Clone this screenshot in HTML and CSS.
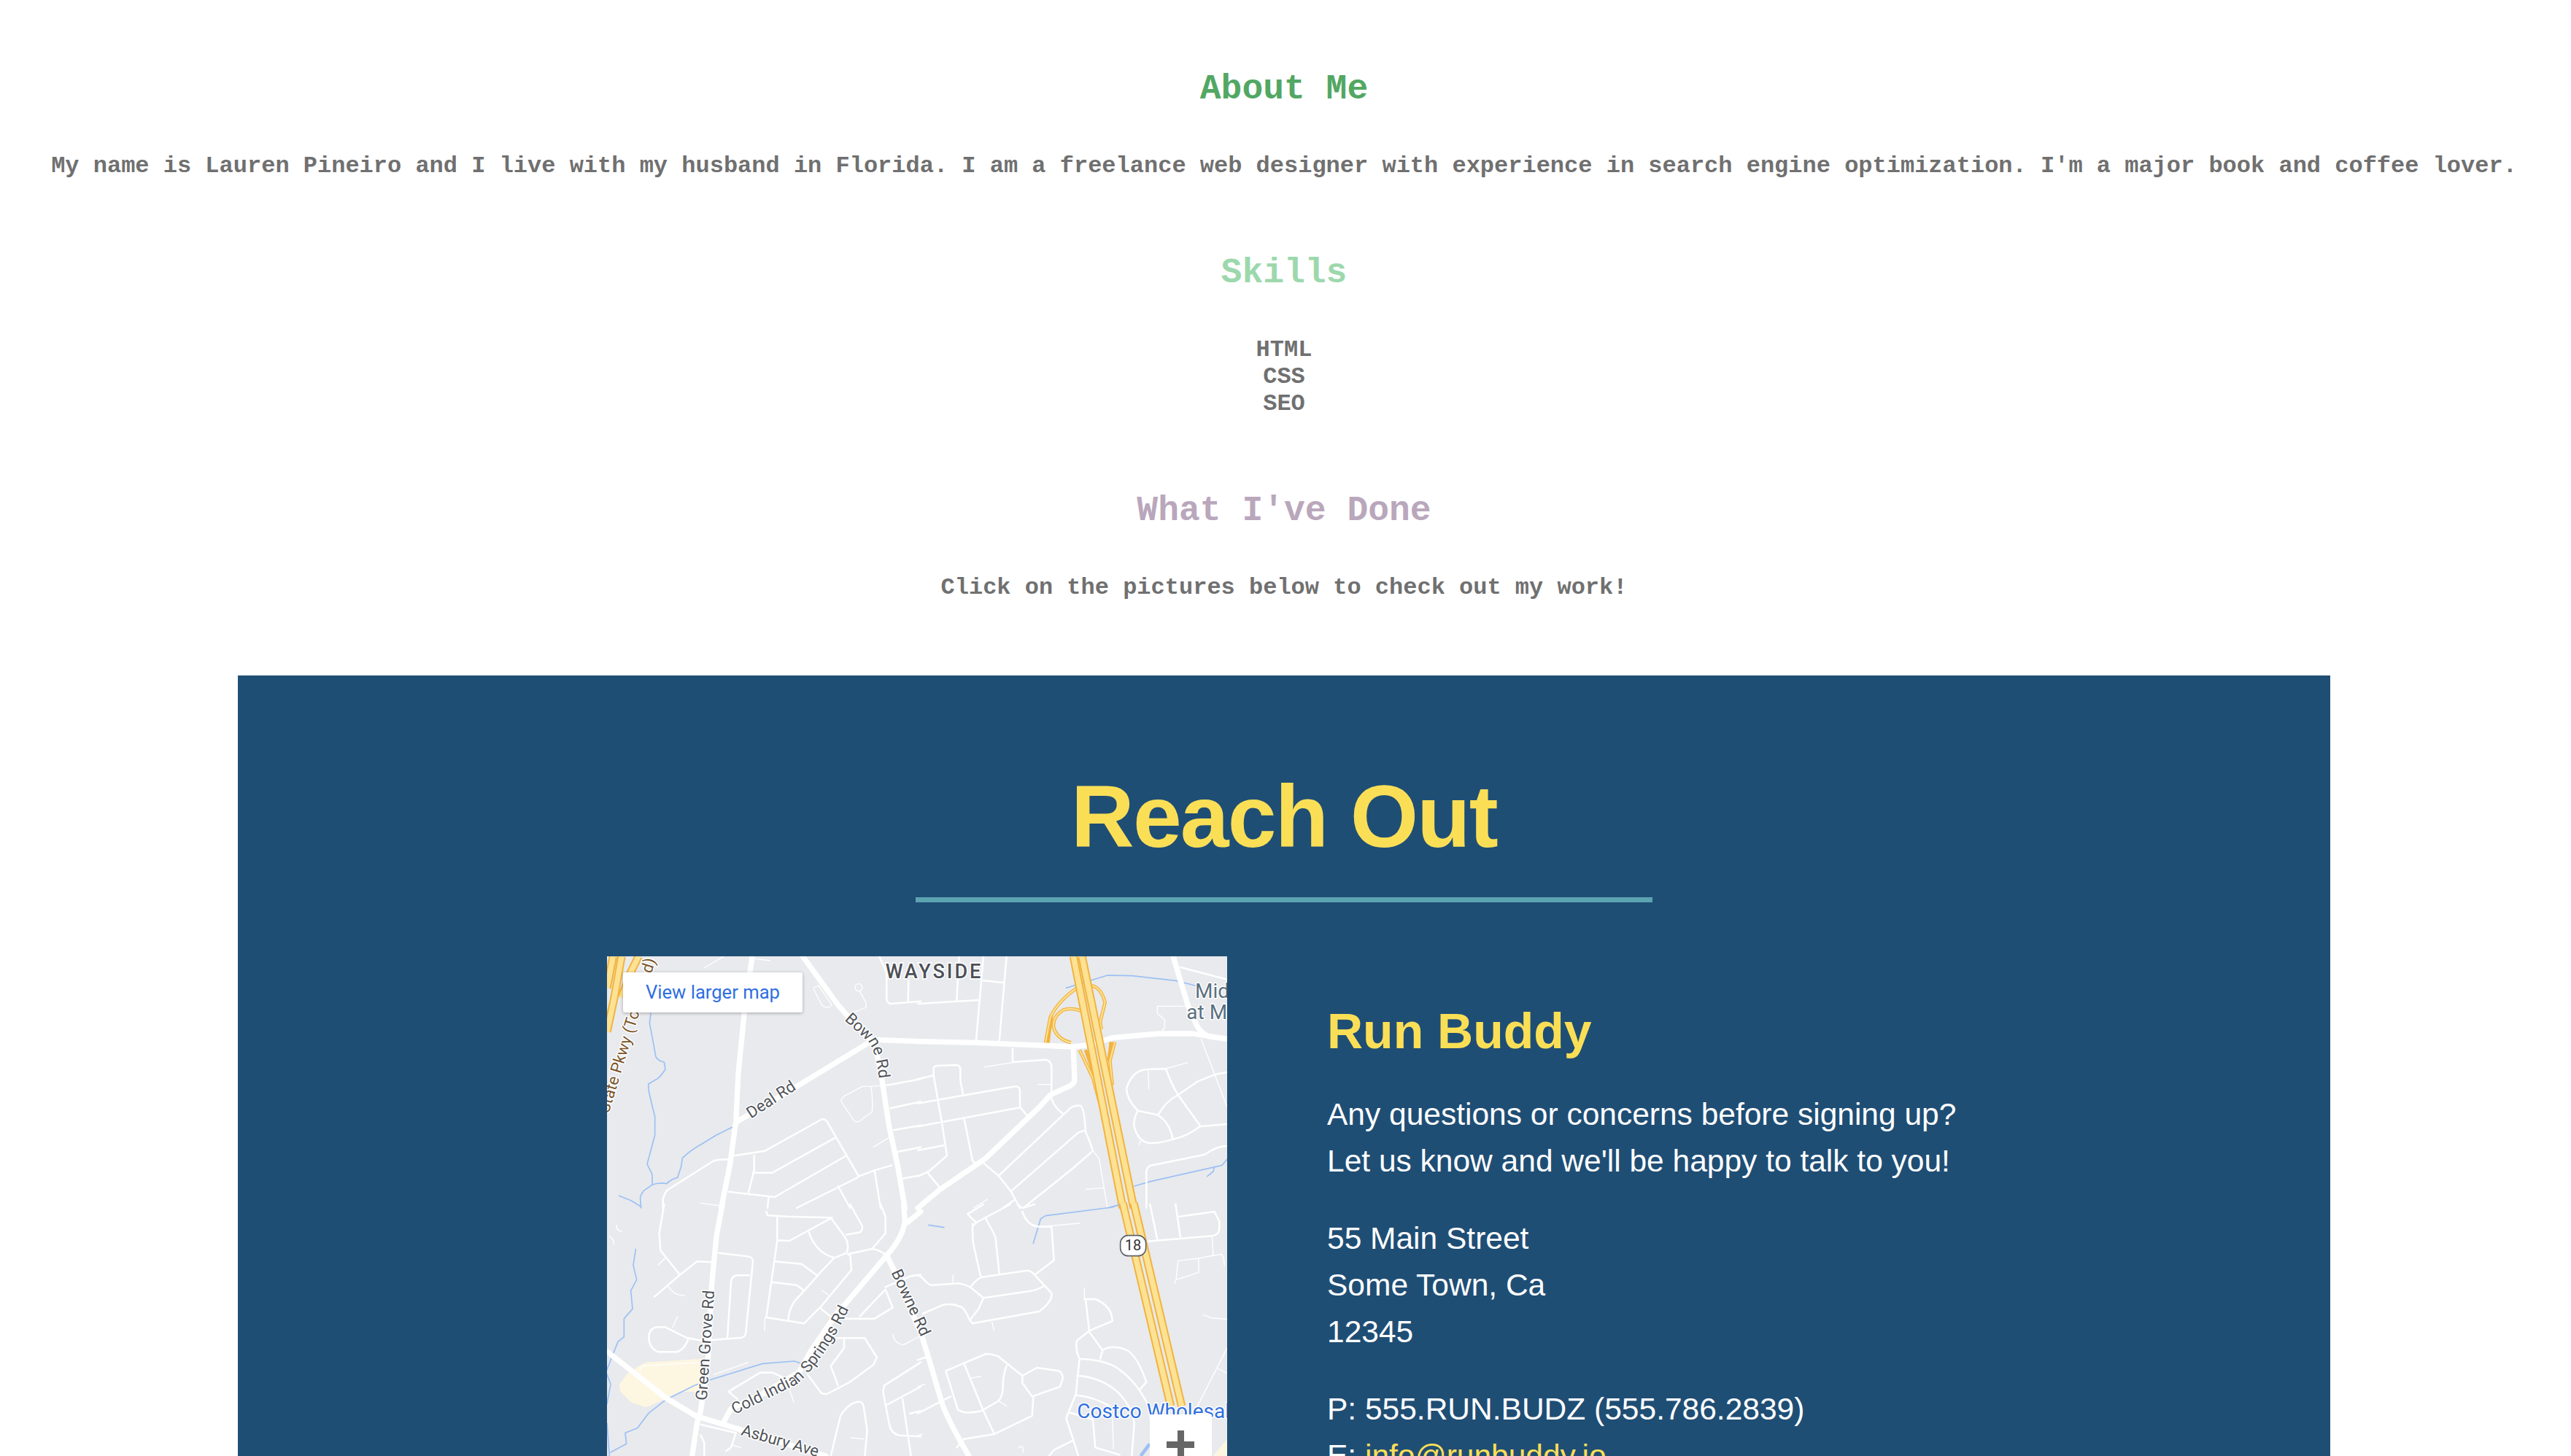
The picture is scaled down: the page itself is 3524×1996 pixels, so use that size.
FILE: index.html
```html
<!DOCTYPE html>
<html lang="en">
<head>
<meta charset="utf-8">
<title>Run Buddy</title>
<link rel="stylesheet" href="styles.css">
</head>
<body>
<main class="page">
  <section class="about">
    <h2 class="heading heading-green">About Me</h2>
    <p class="copy copy-bio">My name is Lauren Pineiro and I live with my husband in Florida. I am a freelance web designer with experience in search engine optimization. I'm a major book and coffee lover.</p>
    <h2 class="heading heading-mint">Skills</h2>
    <p class="copy copy-skills">HTML<br>CSS<br>SEO</p>
    <h2 class="heading heading-mauve">What I've Done</h2>
    <p class="copy copy-last">Click on the pictures below to check out my work!</p>
  </section>

  <section class="contact">
    <h2 class="contact-title">Reach Out</h2>
    <div class="contact-row">
      <div class="map">
        <svg class="map-art" viewBox="0 0 850 900" xmlns="http://www.w3.org/2000/svg" aria-hidden="true">
          <rect class="land" width="850" height="900"/>
          <!-- upper left -->
          <g transform="scale(.33333)">
            <path class="stream" d="M180 235L175 275Q190 350 200 410Q205 428 235 435L240 465Q220 495 205 505L170 525Q170 550 175 570L197 660V735L165 855L185 895L187 940M515 703L450 735L385 775Q340 800 310 830L305 865L290 910Q265 915 245 935Q215 928 185 940L150 965Q135 985 137 1000L140 1035M50 985L100 1005L140 1030"/>
            <path class="thin" d="M400 48L480 0M610 10L670 18M385 1015L460 1025M1095 785L1160 745M1085 535H1050L975 575Q958 590 965 600L1015 675Q1025 685 1035 680L1090 640Q1095 590 1085 535L1150 530M850 128L870 120L925 200Q915 212 905 210Q890 210 880 195L850 135M1040 145L1065 190V210L1030 225L1010 230"/>
            <circle class="thin" cx="1035" cy="128" r="15"/>
            <path class="minor" d="M230 1035V1000Q235 975 250 960L440 840Q465 835 500 835M525 820L650 800L880 672Q895 665 905 680L1035 905M605 820V880L582 970M600 890H680L940 745M500 968L690 990L980 822M1035 905L1100 880L1170 860M780 1035L960 945L1030 910M660 1035L665 990M1150 530L1290 505M1165 625L1290 598M1180 715L1290 695M1190 805L1290 785M1210 915L1290 900M1100 880L1125 1035M950 945L1000 1035M1120 0L1150 70V175Q1152 192 1165 195L1290 185M1240 100L1238 185"/>
            <path class="major" d="M597 0L565 230L540 480L530 680L505 860L470 1035M805 0L870 90L950 200L1020 280L1100 360L1125 470L1160 700L1195 860L1225 1035M535 680L780 535L1085 350M1100 343L1290 350"/>
            <path class="hw-edge" d="M25 0L0 130M60 0L30 170L0 310M130 0L100 60L60 170"/>
            <path class="hw-fill" d="M25 0L0 130M60 0L30 170L0 310M130 0L100 60L60 170"/>
          </g>
          <!-- upper right -->
          <g transform="translate(426 0) scale(.33333)">
            <path class="stream" d="M610 130L650 118L780 78L880 80L1060 100L1140 120M890 945L960 925L1250 860L1272 835M1190 905L1215 885L1220 865M780 1035L830 1022"/>
            <path class="thin" d="M275 455L390 437M495 527H545M720 800L745 830L780 1035M690 958L765 952M985 205H1100M985 205V235L1015 260V295L1005 305M1165 340L1272 620M947 465L950 545M915 760L910 775M1110 437L1020 462M230 1035L285 1000"/>
            <path class="minor" d="M0 505L65 490L65 465Q65 450 80 450L160 447Q175 450 175 465V510L185 565M65 490L100 690L120 820L45 885L0 905M0 605L400 535Q420 535 420 555V620L450 655M0 700L420 622M0 798L105 778M190 665L225 840L235 850M40 890L90 950M170 0L160 180M0 195L250 180M270 0L240 345M270 100L350 108M365 0L335 350M390 380V435L525 425Q550 430 550 455V570M550 585Q560 620 600 650M335 900L600 650L630 622Q650 610 670 615Q685 625 690 720L710 770L720 800L640 870L540 950L440 1030M385 965L660 725L690 715M270 850L335 905L385 970L420 1035M350 1035L400 1000M1080 45L1272 95M1020 462L940 465Q880 470 858 545Q860 590 905 635L985 652Q1035 680 1048 750M905 635Q885 670 890 700Q905 760 950 768Q1000 770 1050 752Q1110 740 1160 700L1272 690M1020 462Q1040 520 1070 570L1160 695M990 650Q1015 600 1070 570L1150 515L1225 485L1272 477M940 1035V885Q942 865 960 860L1180 815Q1230 780 1272 780"/>
            <path class="major" d="M0 350L240 355L640 372L700 365L800 335L990 318H1130L1272 340M640 385L645 510Q640 530 610 540L545 570L500 620L280 830L90 960L0 1035M1050 0L1080 100L1110 200L1150 290Q1170 320 1200 330L1272 340"/>
            <path class="ramp-edge" d="M655 130Q580 180 545 250L525 355M670 225Q640 210 600 220Q555 245 558 290Q570 340 630 355M550 240L535 355M715 120Q755 130 770 190L750 270L755 300M665 385L720 500L750 610M690 385L720 470M810 352L790 430L800 530M795 352L785 430"/>
            <path class="ramp-fill" d="M655 130Q580 180 545 250L525 355M670 225Q640 210 600 220Q555 245 558 290Q570 340 630 355M715 120Q755 130 770 190L750 270L755 300M665 385L720 500L750 610M810 352L790 430L800 530"/>
            <path class="hw-edge" d="M640 0L843 1035M675 0L888 1035"/>
            <path class="hw-fill" d="M640 0L843 1035M675 0L888 1035"/>
          </g>
          <!-- lower left -->
          <g transform="translate(0 340) scale(.33333)">
            <path class="park" d="M130 665L160 650L390 635L385 770H300L240 800L160 835L100 815L55 770L50 740L85 695Z"/>
            <path class="stream" d="M118 185L108 250L122 310L98 355L105 430L70 470V545L45 565L15 640L0 680M0 700L15 740L0 820M800 655L770 645L640 655L430 720L360 745L240 805L170 860L125 920L75 940L80 985L15 1020M0 900L10 1035"/>
            <path class="thin" d="M135 685L145 665L385 650M250 335Q275 375 318 375M240 220L210 250M270 505L290 462M440 700L580 650M885 355L910 372M650 465L648 520M1175 535Q1185 575 1220 578L1290 540M1005 960L1055 965M515 990L550 1000M730 715Q755 770 768 815M10 130Q30 145 28 165M40 85Q35 105 60 112"/>
            <path class="minor" d="M235 0L215 120L220 190L300 290M430 238L370 235L300 290L195 380M460 200L585 215Q600 220 600 235L570 535Q565 545 555 548L440 557M585 292H530Q510 300 510 320L495 548M700 55V150L655 465L810 490L880 420L1005 270L1000 210L990 205M655 30L660 45L740 50L920 55L975 130Q1000 165 985 200L935 220Q860 200 830 115M1000 0L1050 90Q1050 110 1040 115L985 125M700 148L750 150L925 55M690 235L800 245L865 293L930 225M680 320L780 332L810 355M865 295L770 400Q745 440 745 480M990 205L1090 183Q1130 190 1155 215M1090 183L1145 120V50L1125 0M875 425L930 470H1100L1175 425L1145 350L1040 460M1145 340L1250 295L1290 290M330 550L240 505H200Q172 515 172 545Q172 590 210 607H290Q325 590 335 550M330 550L390 560L445 557M925 550H1060L1110 630L1095 660L1000 730L905 780Q885 780 880 775L825 700M975 555V590L920 665L950 745M500 770L630 692H680L730 715M500 770L535 800M400 1035V980L385 950M385 905L530 940L510 1000L490 1015M920 1035L960 870Q990 820 1030 812Q1050 810 1055 830L1070 930L1060 1035M1290 650L1140 745L1135 770L1160 900Q1165 940 1200 950L1290 955M1150 825L1290 750M1215 800L1250 1035M1245 860L1290 850"/>
            <path class="major" d="M475 0L450 130L430 340L415 640L385 850L370 900L350 1035M0 605L240 795L365 870L900 1035M1290 30L1235 75M1220 0L1225 70Q1215 140 1150 210L980 410L950 440L840 600L790 690L640 780L510 840L480 895M1150 210L1180 270L1290 530"/>
          </g>
          <!-- lower right -->
          <g transform="translate(426 340) scale(.33333)">
            <path class="park" d="M1210 1040L1272 965V1040Z"/>
            <path class="stream stream-wide" d="M920 1030L950 990"/>
            <path class="stream" d="M45 85L108 95M475 160L505 60L525 47L800 12L830 0"/>
            <path class="thin" d="M145 290V325M305 485L313 517M665 78L500 92M685 343V390M1210 130L1215 210L1155 222L1070 232L1062 310L1155 280V225M1215 210L1250 205Q1260 220 1260 250M1060 315L1055 325M1175 455L1210 468L1272 472M1272 590L1150 830M1235 675L1272 695M215 715L258 708M335 810L365 830M415 1000L430 995L435 1020M0 950L20 945M0 750L30 740M800 880L805 1005"/>
            <path class="minor" d="M0 640L30 630M0 860L135 790M0 290Q25 305 30 315Q50 335 60 332L170 325Q195 330 215 340L270 385L440 360Q490 355 520 335M220 335Q235 315 260 300L450 272Q470 275 480 290L550 365Q555 400 500 440L225 490L210 470Q190 420 170 420Q140 405 100 415L20 450M270 385L250 430L215 475M225 80Q225 150 230 170L258 295M280 60Q320 130 320 140L335 285M205 40L240 75L225 90M240 75L380 0M205 40L270 0M430 30Q450 90 500 92H550L560 230L480 290M410 0L430 15L480 0M945 152L1210 130Q1240 125 1240 100V70L1220 30L1075 50M1060 0L1080 135M955 0L985 145M685 390H730Q800 420 800 480L705 520L690 390M705 520L655 560Q645 590 665 635L650 780L610 880L640 970L660 1035M705 525L760 600L750 635M760 600Q800 575 860 600Q900 620 940 730L915 760M665 635Q780 640 830 680Q900 730 950 830M655 705Q750 710 820 770Q880 830 890 900L880 1035M650 785Q720 790 790 830M620 855L720 885L730 1000L830 1030M640 970L560 1010L540 1035M115 685L280 615Q305 615 330 625L430 705L490 672L580 685Q600 700 595 720L585 750L470 790L430 735V705M115 685L165 845Q195 865 260 850L330 810Q350 790 350 750Q350 700 365 665M190 655L270 850L315 945L470 870L475 790M315 945L190 965L160 1000"/>
            <path class="major" d="M10 520L50 650L100 820Q130 900 210 1035"/>
            <path class="hw-edge" d="M843 -5L1040 830M888 -5L1085 830"/>
            <path class="hw-fill" d="M843 -5L1040 830M888 -5L1085 830"/>
          </g>
          <!-- labels -->
          <defs>
            <path id="p-bowne-a" d="M975 262L1075 352Q1110 400 1120 520"/>
            <path id="p-cold" d="M525 865L780 740Q890 650 1010 400"/>
            <path id="p-bowne-c" d="M1168 280L1300 565"/>
          </defs>
          <g transform="scale(.33333)">
            <text class="label label-brown" transform="translate(200 15) rotate(-73)" text-anchor="end">State Pkwy (Toll Road)</text>
            <text class="label" transform="translate(592 668) rotate(-33)">Deal Rd</text>
            <text class="label"><textPath href="#p-bowne-a">Bowne Rd</textPath></text>
            <text class="place" x="1145" y="90">WAYSIDE</text>
            <text class="label label-slate" x="2418" y="170">Mid</text>
            <text class="label label-slate" x="2383" y="257">at M</text>
          </g>
          <g transform="translate(0 340) scale(.33333)">
            <text class="label" transform="translate(410 808) rotate(-86)">Green Grove Rd</text>
            <text class="label"><textPath href="#p-cold">Cold Indian Springs Rd</textPath></text>
            <text class="label" transform="translate(548 948) rotate(16)">Asbury Ave</text>
            <text class="label"><textPath href="#p-bowne-c">Bowne Rd</textPath></text>
          </g>
          <g transform="translate(426 340) scale(.33333)">
            <rect class="shield" x="833" y="128" width="105" height="84" rx="32"/>
            <text class="shield-num" x="885" y="190" text-anchor="middle">18</text>
            <text class="label label-blue" x="655" y="878">Costco Wholesale</text>
          </g>
        </svg>
        <a class="map-link">View larger map</a>
        <div class="map-zoom"><span class="plus"></span></div>
      </div>
      <div class="info">
        <h3 class="info-title">Run Buddy</h3>
        <p class="info-text">Any questions or concerns before signing up?<br>Let us know and we'll be happy to talk to you!</p>
        <p class="info-text">55 Main Street<br>Some Town, Ca<br>12345</p>
        <p class="info-text">P: 555.RUN.BUDZ (555.786.2839)<br>E: <a class="info-link">info@runbuddy.io</a></p>
      </div>
    </div>
  </section>
</main>
</body>
</html>
```
FILE: styles.css
```css
html, body {
  margin: 0;
  height: 1996px;
  overflow: hidden;
  background: #fff;
}

.page {
  width: 3520px;
}

.about {
  padding-top: 95px;
  text-align: center;
  font-family: "Liberation Mono", "Courier New", monospace;
  font-weight: 700;
  color: #707070;
}

.heading {
  margin: 0 0 60px;
  font-size: 48px;
  font-weight: 700;
}

.heading-green { color: #52a763; }
.heading-mint { color: #9dd8ad; }
.heading-mauve { color: #b9a7bc; }

.copy {
  margin: 0 0 101px;
  font-size: 32px;
}

.copy-last {
  margin-bottom: 102px;
}

.contact {
  width: 2868px;
  height: 1200px;
  margin: 0 auto;
  padding-top: 121px;
  box-sizing: border-box;
  background: #1f4e75;
  font-family: "Liberation Sans", Arial, Helvetica, sans-serif;
  color: #fff;
}

.contact-title {
  width: 1010px;
  margin: 0 auto 74px;
  padding-bottom: 39px;
  border-bottom: 7px solid #5ba3b0;
  text-align: center;
  font-size: 120px;
  line-height: 144px;
  font-weight: 700;
  letter-spacing: -1.8px;
  color: #fadf56;
}

.contact-row {
  display: flex;
  gap: 137px;
  padding-left: 506px;
}

.map {
  position: relative;
  flex: none;
  width: 850px;
  height: 900px;
  overflow: hidden;
}

.map-art {
  display: block;
  width: 850px;
  height: 900px;
}

.land { fill: #e8eaed; }
.park { fill: #fdf6e1; }

.stream, .thin, .minor, .major, .hw-edge, .hw-fill, .ramp-edge, .ramp-fill {
  fill: none;
  stroke-linecap: round;
  stroke-linejoin: round;
}

.stream { stroke: #9dc0f4; stroke-width: 5; }
.stream-wide { stroke-width: 14; }
.thin { stroke: #fff; stroke-width: 4; }
.minor { stroke: #fff; stroke-width: 7.5; }
.major { stroke: #fff; stroke-width: 22; }
.hw-edge { stroke: #f2b340; stroke-width: 34; stroke-linecap: butt; }
.hw-fill { stroke: #fde293; stroke-width: 22; stroke-linecap: butt; }
.ramp-edge { stroke: #f2b340; stroke-width: 14; stroke-linecap: butt; }
.ramp-fill { stroke: #fde293; stroke-width: 6; stroke-linecap: butt; }

.label {
  font-family: Roboto, "Liberation Sans", sans-serif;
  font-size: 66px;
  fill: #50545a;
  stroke: #fff;
  stroke-width: 9px;
  paint-order: stroke;
  stroke-linejoin: round;
}

.label-brown { fill: #7b5528; }
.label-slate { fill: #5a7080; font-size: 84px; }
.label-blue { fill: #2f6fe0; font-size: 84px; }

.place {
  font-family: Roboto, "Liberation Sans", sans-serif;
  font-size: 81px;
  font-weight: 500;
  letter-spacing: 9px;
  fill: #4c5056;
  stroke: #fff;
  stroke-width: 9px;
  paint-order: stroke;
}

.shield { fill: #fff; stroke: #5f6368; stroke-width: 5; }

.shield-num {
  font-family: Roboto, "Liberation Sans", sans-serif;
  font-size: 60px;
  fill: #333;
}

.map-link {
  position: absolute;
  left: 22px;
  top: 22px;
  width: 246px;
  height: 55px;
  box-sizing: border-box;
  padding-left: 31px;
  background: #fff;
  border-radius: 3px;
  box-shadow: 0 1px 4px rgba(0, 0, 0, .3);
  font-family: Roboto, "Liberation Sans", sans-serif;
  font-size: 25.6px;
  line-height: 55px;
  color: #2f6fe0;
}

.map-zoom {
  position: absolute;
  left: 744px;
  top: 628px;
  width: 85px;
  height: 100px;
  background: #fff;
}

.plus {
  position: absolute;
  left: 23px;
  top: 22px;
  width: 38px;
  height: 38px;
  background:
    linear-gradient(#666, #666) center / 100% 9px no-repeat,
    linear-gradient(#666, #666) center / 9px 100% no-repeat;
}

.info {
  width: 900px;
}

.info-title {
  margin: 62px 0 43px;
  font-size: 68px;
  line-height: 80px;
  font-weight: 700;
  color: #fadf56;
}

.info-text {
  margin: 0 0 42px;
  font-size: 42.5px;
  line-height: 64px;
}

.info-link {
  color: #fadf56;
  text-decoration: underline;
}
```
